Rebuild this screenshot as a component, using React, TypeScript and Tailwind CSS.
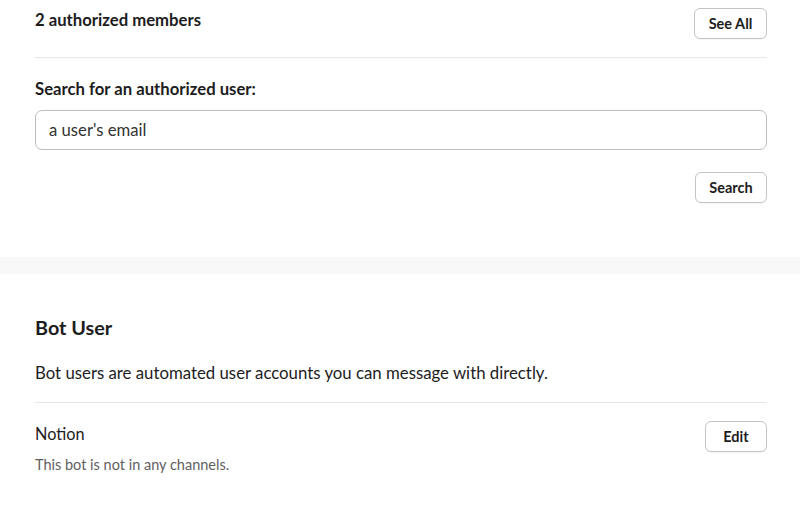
import React from 'react';

function OutlineButton({ label, width }: { label: string; width: string }) {
  return (
    <button
      type="button"
      className={`${width} h-[31px] shrink-0 rounded-[6px] border border-[#c4c4c4] bg-white text-[14.5px] font-bold text-[#1d1c1d] shadow-[0_1px_1px_rgba(0,0,0,0.04)]`}
    >
      {label}
    </button>
  );
}

export default function App() {
  return (
    <div className="min-h-[507px] w-full bg-white font-['Lato','Noto_Sans',sans-serif] text-[#1d1c1d]">
      {/* Authorized members */}
      <section className="pl-[35px] pr-[33px] pt-[8px]">
        <div className="flex items-start justify-between">
          <div className="pt-[1px] text-[16.7px] font-bold leading-[22px]">2 authorized members</div>
          <OutlineButton label="See All" width="w-[73px]" />
        </div>
        <div className="mt-[18px] border-t border-[#e8e8e8]" />
        <div className="mt-[20px] text-[16.7px] font-bold leading-[22px]">Search for an authorized user:</div>
        <input
          type="text"
          defaultValue="a user's email"
          className="mt-[10px] block h-[40px] w-full rounded-[7px] border border-[#bdbdbd] px-[13px] text-[16.7px] text-[#333] outline-none"
        />
        <div className="mt-[22px] flex justify-end">
          <OutlineButton label="Search" width="w-[72px]" />
        </div>
      </section>

      <div className="mt-[54px] h-[17px] bg-[#f8f8f8]" />

      {/* Bot user */}
      <section className="pl-[35px] pr-[33px] pt-[40px]">
        <h2 className="text-[19.8px] font-bold leading-[26px]">Bot User</h2>
        <p className="mt-[22px] text-[16.8px] leading-[22px]">
          Bot users are automated user accounts you can message with directly.
        </p>
        <div className="mt-[18px] border-t border-[#e8e8e8]" />
        <div className="mt-[18px] flex items-start justify-between">
          <div className="pt-[2px]">
            <div className="text-[16.3px] leading-[22px]">Notion</div>
            <div className="mt-[11px] text-[14.5px] leading-[18px] text-[#616061]">
              This bot is not in any channels.
            </div>
          </div>
          <OutlineButton label="Edit" width="w-[62px]" />
        </div>
      </section>
    </div>
  );
}
